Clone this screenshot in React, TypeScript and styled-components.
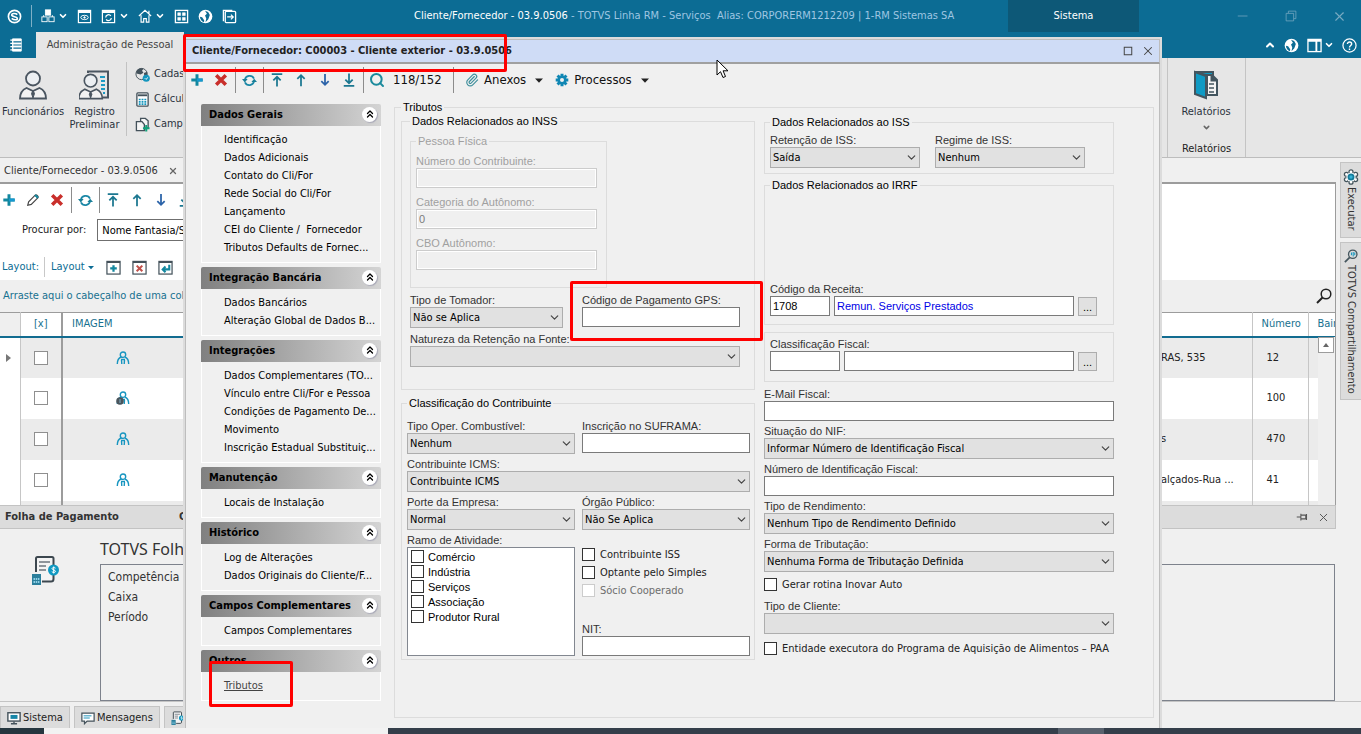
import React, { useId } from "react";
import styled, { createGlobalStyle } from "styled-components";
import { ChevronDown, ChevronUp, ChevronsUp, X, Search, Paperclip } from "lucide-react";

const ui = `"DejaVu Sans Condensed", "DejaVu Sans", sans-serif`;
const plain = `"Liberation Sans", Arial, sans-serif`;
const brand = "#0c6c94";
const face = "#f0f0f0";
const teal = "#17718f";

const GlobalStyle = createGlobalStyle`
  * { box-sizing: border-box; }
  body { margin: 0; background: ${face}; font: 11px/14px ${ui}; color: #222; }
  button, input, select { font: inherit; color: inherit; margin: 0; }
  button { padding: 0; border: 0; background: none; }
  svg { display: block; flex: none; }
`;

/* ---------- shell ---------- */

const Shell = styled.div`
  position: relative;
  display: flex;
  flex-direction: column;
  height: 100vh;
  min-height: 734px;
  overflow: hidden;
`;

const TitleBar = styled.header`
  display: flex;
  align-items: center;
  height: 32px;
  flex: none;
  background: ${brand};
  color: #fff;
`;

const QuickAccess = styled.div`
  display: flex;
  align-items: center;
  gap: 9px;
  width: 414px;
  flex: none;
  padding-left: 7px;
`;

const QuickButton = styled.button`
  display: flex;
  align-items: center;
  gap: 3px;
  height: 24px;
  color: #fff;
`;

const QuickRule = styled.span`
  width: 1px;
  height: 22px;
  background: #7fb0c6;
`;

const AppTitle = styled.h1`
  flex: 1;
  margin: 0;
  font-size: 11px;
  font-weight: 400;
  white-space: pre;
  color: #9ec6e2;
  b { font-weight: 400; color: #fff; }
`;

const ContextTab = styled.div`
  width: 131px;
  height: 32px;
  line-height: 32px;
  text-align: center;
  background: #0d5877;
`;

const WindowButtons = styled.div`
  display: flex;
  justify-content: space-between;
  align-items: center;
  width: 222px;
  padding: 0 12px 0 94px;
  button { width: 20px; height: 20px; color: #78aac2; display: grid; place-items: center; }
`;

const RibbonTabs = styled.nav`
  display: flex;
  height: 26px;
  flex: none;
  background: ${brand};
  color: #fff;
`;

const FileButton = styled.button`
  display: grid;
  place-items: center;
  width: 36px;
  padding-right: 4px;
  color: #fff;
`;

const RibbonTab = styled.button`
  width: 148px;
  height: 26px;
  background: #e6e6e6;
  color: #444;
`;

const RibbonTools = styled.div`
  display: flex;
  align-items: center;
  gap: 8px;
  margin-left: auto;
  padding-right: 4px;
`;

const ToolPair = styled.span`
  display: flex;
  align-items: center;
  gap: 2px;
`;

const Ribbon = styled.section`
  display: flex;
  height: 100px;
  flex: none;
  background: #e6e6e6;
  border-bottom: 1px solid #bdbdbd;
`;

const BigButton = styled.button<{ $w: number }>`
  display: flex;
  flex-direction: column;
  align-items: center;
  align-self: flex-start;
  gap: 5px;
  width: ${(p) => p.$w}px;
  padding-top: 12px;
  line-height: 13px;
  color: #2b3340;
  white-space: nowrap;
`;

const RibbonRule = styled.span`
  width: 1px;
  height: 74px;
  margin: 4px 8px 0 3px;
  background: #c2c2c2;
`;

const SmallStack = styled.div`
  display: flex;
  flex-direction: column;
  gap: 9px;
  padding-top: 8px;
`;

const SmallButton = styled.button`
  display: flex;
  align-items: center;
  gap: 4px;
  height: 16px;
  color: #2b3340;
`;

const ReportGroup = styled.div`
  display: flex;
  flex-direction: column;
  align-items: center;
  justify-content: space-between;
  width: 79px;
  margin: 0 115px 0 auto;
  padding-bottom: 1px;
  border: solid #c4c4c4;
  border-width: 0 1px;
`;

const Workspace = styled.div`
  display: flex;
  flex: 1;
  min-height: 0;
`;

const Main = styled.main`
  display: flex;
  flex-direction: column;
  flex: 1;
  min-width: 0;
`;

const DocTab = styled.div`
  display: flex;
  align-items: center;
  gap: 10px;
  height: 24px;
  flex: none;
  padding: 2px 0 0 4px;
  color: #333;
`;

const ListPane = styled.section`
  position: relative;
  display: flex;
  flex-direction: column;
  height: 323px;
  flex: none;
  overflow: hidden;
  background: #fff;
  border-top: 2px solid #9c9c9c;
  border-right: 1px solid #9c9c9c;
`;

const Toolbar = styled.div`
  display: flex;
  align-items: center;
  height: 32px;
  flex: none;
  margin: 0 -3px;
`;

const ToolButton = styled.button`
  display: grid;
  place-items: center;
  width: 24px;
  height: 24px;
`;

const ToolRule = styled.span`
  width: 1px;
  height: 26px;
  margin: 0 1px 0 2px;
  background: #8c8c8c;
`;

const FindRow = styled.label`
  display: flex;
  align-items: center;
  gap: 11px;
  height: 28px;
  flex: none;
  padding-left: 22px;
  input {
    width: 200px;
    height: 22px;
    padding: 0 4px;
    border: 1px solid #6f6f6f;
    background: #fff;
    color: #000;
  }
`;

const LayoutRow = styled.div`
  display: flex;
  align-items: center;
  height: 36px;
  flex: none;
  padding: 10px 0 0 2px;
  color: ${brand};
`;

const LayoutRule = styled.span`
  width: 1px;
  height: 20px;
  margin: 0 6px 0 5px;
  background: #c8c8c8;
`;

const LayoutMenu = styled.button`
  display: flex;
  align-items: center;
  gap: 3px;
`;

const LayoutActions = styled.div`
  display: flex;
  gap: 2px;
  padding-left: 8px;
`;

const GroupHint = styled.div`
  display: flex;
  align-items: center;
  justify-content: space-between;
  height: 32px;
  flex: none;
  padding: 0 3px;
  background: #efefef;
  color: ${teal};
`;

const Grid = styled.table`
  width: 100%;
  table-layout: fixed;
  border-collapse: collapse;
  border-top: 1px solid #9c9c9c;
  color: #222;

  th {
    height: 24px;
    padding: 0 9px;
    font-weight: 400;
    text-align: left;
    color: ${teal};
    border-bottom: 2px solid #126c90;
    border-right: 1px solid #c6c6c6;
    white-space: nowrap;
  }
  th:first-child { background: #efefef; }
  td {
    height: 41px;
    padding: 0 14px;
    border-right: 1px solid #c6c6c6;
    white-space: nowrap;
  }
  tbody tr:nth-child(odd) td { background: #ebebeb; }
  tbody tr td:first-child { background: #fff; padding: 0 6px; }
  th:nth-child(2), td:nth-child(2) { border-right: 2px solid #9c9c9c; }
  th:nth-child(2) { text-align: center; padding: 0; }
  td:nth-child(2) { padding: 0 13px; }
  td:nth-child(3) { padding: 0 0 0 53px; }
  th:nth-child(3), td:nth-child(3) { border-right: 0; }
  th:nth-child(6) { border-right: 0; }
  td:nth-child(4) { padding: 0; }
  td:nth-child(6) { border-right: 0; }
`;

const ScrollTrack = styled.div`
  position: absolute;
  top: 153px;
  right: 0;
  bottom: 0;
  width: 17px;
  background: #efefef;
  button {
    display: grid;
    place-items: center;
    width: 16px;
    height: 16px;
    border: 1px solid #9c9c9c;
    background: #fff;
  }
`;

const Check = styled.input.attrs({ type: "checkbox" })<{ $soft?: boolean }>`
  appearance: none;
  display: block;
  flex: none;
  width: ${(p) => (p.$soft ? 14 : 13)}px;
  height: ${(p) => (p.$soft ? 14 : 13)}px;
  border: 1px solid ${(p) => (p.$soft ? "#8f8f8f" : "#333")};
  background: #fff;
  &:checked { background: ${brand}; }
  &:disabled { border-color: #ccc; }
`;

const DockHeader = styled.header`
  display: flex;
  align-items: center;
  height: 24px;
  flex: none;
  padding: 0 5px;
  background: #dcdcdc;
  border: solid #c3c3c3;
  border-width: 1px 1px 1px 0;
  font-weight: 700;
  color: #333;
  span { width: 174px; }
  span:last-of-type { flex: 1; }
  button { margin-left: 9px; color: #555; }
`;

const DockBody = styled.section`
  display: flex;
  flex: 1;
  min-height: 0;
  color: #333;
`;

const DockIcon = styled.div`
  width: 100px;
  padding: 26px 0 0 31px;
`;

const DockContent = styled.div`
  display: flex;
  flex-direction: column;
  flex: 1;
  h2 { margin: 10px 0 5px; font: 400 16px/20px "Noto Sans", sans-serif; }
  ul {
    flex: 1;
    margin: 0 1px 0 0;
    padding: 2px 7px;
    list-style: none;
    border: 1px solid #7d828c;
    font-size: 12px;
    line-height: 20px;
  }
`;

const SideTabs = styled.aside`
  display: flex;
  flex-direction: column;
  gap: 4px;
  width: 21px;
  margin: 4px 0 0 4px;
`;

const SideTab = styled.button`
  display: flex;
  align-items: center;
  gap: 2px;
  width: 21px;
  padding: 6px 0;
  writing-mode: vertical-rl;
  border: 1px solid #c4c4c4;
  border-right: 0;
  background: #dcdcdc;
  color: #333;
`;

const StatusBar = styled.footer`
  display: flex;
  gap: 4px;
  height: 27px;
  flex: none;
  padding-top: 4px;
  border-top: 1px solid #c4c4c4;
`;

const StatusButton = styled.button`
  display: flex;
  align-items: center;
  gap: 2px;
  padding: 0 6px;
  border: 1px solid #c4c4c4;
  border-bottom: 0;
  background: #dcdcdc;
  color: #222;
`;

const Taskbar = styled.div`
  display: grid;
  grid-template-columns: 44px 344px 1fr 46px 257px;
  height: 6px;
  flex: none;
  background: #343e4a;
  i:nth-child(1) { background: #25363f; }
  i:nth-child(2) { background: #f2f2f2; }
  i:nth-child(4) { background: #58616d; }
`;

/* ---------- dialog ---------- */

const Dialog = styled.section`
  position: absolute;
  top: 37px;
  left: 183px;
  right: 199px;
  bottom: 6px;
  display: flex;
  flex-direction: column;
  background: ${face};
  border: 2px solid #dcdcdc;
  border-bottom: 0;
`;

const DialogTitle = styled.header`
  display: flex;
  align-items: center;
  height: 25px;
  flex: none;
  padding: 0 1px 0 6px;
  background: #cfdcf6;
  border: 1px solid #bdbdbd;
  border-bottom: 2px solid #a0a0a0;
  h2 { flex: 1; margin: 0; font: 700 11px/14px ${ui}; color: #222; }
  button { display: grid; place-items: center; width: 20px; height: 20px; color: #444; }
`;

const DialogBody = styled.div`
  display: flex;
  flex: 1;
  flex-direction: column;
  border: solid #bdbdbd;
  border-width: 0 1px;
`;

const DialogTools = styled(Toolbar)`
  margin: 0 -1px;
  font-size: 13px;
  color: #111;
`;

const RecordCount = styled.span`
  width: 62px;
  padding-left: 4px;
`;

const MenuButton = styled.button<{ $gap: number }>`
  display: flex;
  align-items: center;
  gap: 5px;
  padding-left: ${(p) => p.$gap}px;
  svg:last-child { margin-left: 4px; }
`;

const DialogColumns = styled.div`
  display: flex;
  flex: 1;
  gap: 13px;
  padding: 4px 5px 10px 15px;
`;

const SideNav = styled.nav`
  display: flex;
  flex-direction: column;
  gap: 4px;
  width: 180px;
  flex: none;
  padding-top: 4px;
`;

const NavHead = styled.button`
  display: flex;
  align-items: center;
  justify-content: space-between;
  width: 100%;
  height: 22px;
  padding: 0 4px 0 8px;
  border-radius: 2px 2px 0 0;
  background: linear-gradient(90deg, #808080, #d4d4d4);
  font-weight: 700;
  color: #000;
  i {
    display: grid;
    place-items: center;
    width: 15px;
    height: 15px;
    margin-bottom: 2px;
    border-radius: 50%;
    background: #fff;
    box-shadow: 1px 1px 1px #aaaab8;
  }
`;

const NavList = styled.ul`
  margin: 0;
  padding: 5px 0 5px 22px;
  list-style: none;
  border: 1px solid #fff;
  border-top: 0;
  li { height: 18px; }
`;

const NavLink = styled.a<{ $current?: boolean }>`
  font: 11px/18px ${ui};
  white-space: pre;
  color: ${(p) => (p.$current ? "#444" : "#000")};
  text-decoration: ${(p) => (p.$current ? "underline" : "none")};
`;

const Group = styled.fieldset<{ $pad?: string; $off?: boolean }>`
  min-width: 0;
  margin: 0;
  padding: ${(p) => p.$pad ?? "0"};
  border: 1px solid #dcdcdc;
  font-family: ${plain};
  color: ${(p) => (p.$off ? "#a0a0a0" : "#000")};
  > legend { padding: 0 2px; line-height: 14px; }
`;

const Columns = styled.div`
  display: flex;
  gap: 9px;
`;

const Column = styled.div<{ $w: number; $gap?: number; $top?: number }>`
  display: flex;
  flex-direction: column;
  width: ${(p) => p.$w}px;
  gap: ${(p) => p.$gap ?? 0}px;
  padding-top: ${(p) => p.$top ?? 0}px;
`;

const Stack = styled.div<{ $gap: number; $top?: number }>`
  display: flex;
  flex-direction: column;
  gap: ${(p) => p.$gap}px;
  padding-top: ${(p) => p.$top ?? 0}px;
`;

const Row = styled.div<{ $cols: string; $gap: number }>`
  display: grid;
  grid-template-columns: ${(p) => p.$cols};
  column-gap: ${(p) => p.$gap}px;
  align-items: start;
`;

const FieldBox = styled.div`
  display: flex;
  flex-direction: column;
  min-width: 0;
`;

const Label = styled.label<{ $off?: boolean }>`
  font-family: ${plain};
  line-height: 14px;
  white-space: nowrap;
  color: ${(p) => (p.$off ? "#a0a0a0" : "#333")};
`;

const TextBox = styled.input.attrs({ type: "text" })<{ $link?: boolean }>`
  width: 100%;
  height: 20px;
  padding: 0 2px;
  border: 1px solid #7a7a7a;
  background: #fff;
  color: ${(p) => (p.$link ? "#0000e6" : "#000")};
  &:disabled {
    border-color: #ccc;
    background: ${face};
    box-shadow: inset 0 0 0 1px #fff;
    color: #7c7c7c;
  }
`;

const SelectWrap = styled.span`
  position: relative;
  display: block;
  svg { position: absolute; top: 4px; right: 2px; pointer-events: none; color: #444; }
`;

const Select = styled.select`
  appearance: none;
  display: block;
  width: 100%;
  height: 21px;
  padding: 0 20px 0 2px;
  border: 1px solid #adadad;
  border-radius: 0;
  background: #e1e1e1;
  font-family: ${ui};
  color: #000;
`;

const Browse = styled.button`
  width: 19px;
  height: 19px;
  margin-top: 1px;
  border: 1px solid #adadad;
  background: #e1e1e1;
  line-height: 14px;
`;

const CheckLabel = styled.label<{ $off?: boolean; $plain?: boolean }>`
  display: flex;
  align-items: center;
  gap: ${(p) => (p.$plain ? 4 : 5)}px;
  height: ${(p) => (p.$plain ? 15 : 13)}px;
  font-family: ${(p) => (p.$plain ? plain : ui)};
  white-space: nowrap;
  color: ${(p) => (p.$off ? "#6d6d6d" : p.$plain ? "#000" : "#222")};
`;

const CheckList = styled.div`
  height: 109px;
  padding: 1px 3px;
  border: 1px solid #828790;
  background: #fff;
`;

const Ticks = styled.div`
  display: flex;
  flex-direction: column;
  gap: 5px;
  height: 123px;
  padding-top: 15px;
`;

const NitSlot = styled.div`
  margin-top: auto;
`;

const FiscalGroup = styled(Group)`
  margin-top: 3px;
`;

const FormArea = styled.div`
  display: grid;
  flex: 1;
  min-width: 0;
`;

const Highlight = styled.div<{ $x: number; $y: number; $w: number; $h: number }>`
  position: absolute;
  left: ${(p) => p.$x}px;
  top: ${(p) => p.$y}px;
  width: ${(p) => p.$w}px;
  height: ${(p) => p.$h}px;
  border: 3px solid #f00;
  border-radius: 2px;
  pointer-events: none;
`;

const Cursor = styled.svg`
  position: absolute;
  left: 716px;
  top: 59px;
  pointer-events: none;
`;

/* ---------- icons ---------- */

const Svg = ({ s = 16, children }: { s?: number; children: React.ReactNode }) => (
  <svg width={s} height={s} viewBox="0 0 16 16" fill="none" stroke="currentColor" aria-hidden="true">{children}</svg>
);

const PlusIcon = () => <Svg s={14}><path d="M8 1.5v13M1.5 8h13" stroke="#12879f" strokeWidth="3.4" /><path d="M8 8h6.5" stroke="#1598d0" strokeWidth="3.4" /></Svg>;
const DeleteIcon = () => <Svg s={14}><path d="M2.5 2.5l11 11M13.5 2.5l-11 11" stroke="#c92f2b" strokeWidth="4" /></Svg>;
const PencilIcon = () => <Svg s={14}><path d="M2 14l1-4 7.500-7.500a1.500 1.500 0 0 1 2 0l1 1a1.500 1.500 0 0 1 0 2L6 13z" stroke="#444" strokeWidth="1.300" /><path d="M10 3l3 3 1-1.500L11.500 2z" fill="#12879f" stroke="#12879f" /></Svg>;
const arrowPaths: Record<string, string> = {
  up: "M8 15V2.500M3.800 6.700L8 2.500l4.200 4.200",
  down: "M8 1v12.500M3.800 9.300L8 13.500l4.200-4.200",
  top: "M2 1.200h12M8 15.500V4.500M3.800 8.500L8 4.300l4.200 4.200",
  bottom: "M2 14.800h12M8 .5v11M3.800 7.500L8 11.700l4.200-4.200",
};
const ArrowIcon = ({ kind }: { kind: string }) => <Svg s={14}><path d={arrowPaths[kind]} stroke={kind === "down" ? "#2a62a8" : "#1b7790"} strokeWidth="2" /></Svg>;
const SyncIcon = () => (
  <Svg s={15}>
    <path d="M3 7.500A5.200 5.200 0 0 1 12.800 6M13 8.500A5.200 5.200 0 0 1 3.200 10" stroke="#1a87a6" strokeWidth="1.900" />
    <path d="M0 6.500h6L3 10zM16 9.500h-6L13 6z" fill="#1a7f98" stroke="none" />
  </Svg>
);
const Caret = ({ c = "#222", s = 8 }: { c?: string; s?: number }) => <svg width={s} height="5" viewBox="0 0 8 5" aria-hidden="true"><path d="M0 .5h8L4 4.800z" fill={c} /></svg>;
const GearIcon = ({ s = 14 }: { s?: number }) => (
  <Svg s={s}>
    <g stroke="#0f86b3" strokeWidth="3.400"><path d="M8 .8v14.400M.8 8h14.400M2.900 2.900l10.200 10.200M13.100 2.900L2.900 13.100" /></g>
    <circle cx="8" cy="8" r="5.200" fill="#0f86b3" stroke="none" />
    <circle cx="8" cy="8" r="2.300" fill={face} stroke="none" />
  </Svg>
);
const FlowerGearIcon = () => (
  <Svg s={16}>
    <g fill="#fff" stroke="#44555d" strokeWidth="1.300">
      <circle cx="8" cy="2.800" r="2" /><circle cx="8" cy="13.200" r="2" />
      <circle cx="3.400" cy="5.400" r="2" /><circle cx="12.600" cy="5.400" r="2" />
      <circle cx="3.400" cy="10.600" r="2" /><circle cx="12.600" cy="10.600" r="2" />
    </g>
    <circle cx="8" cy="8" r="4.600" fill="#fff" stroke="none" />
    <circle cx="8" cy="8" r="2.600" fill="#35b4d8" stroke="#147a99" strokeWidth="1.800" />
  </Svg>
);
const GlobeIcon = () => (
  <Svg s={15}>
    <circle cx="8" cy="8" r="7.300" fill="currentColor" stroke="none" />
    <path d="M7.500 1.800l3.300 1.400 1.800 3.300-1.600 4.300-3 3.200.8-4L7.500 7l2-2z" fill={brand} stroke="none" />
    <path d="M2 8.200l2.400.6L6.600 12l-.2 2C4 13.200 2.200 11 2 8.200z" fill={brand} stroke="none" />
  </Svg>
);
const LogoIcon = () => <Svg s={15}><circle cx="8" cy="8" r="6.500" strokeWidth="1.800" /><path d="M11 6c-2-2-6-1.500-6 .5s6 1.500 6 3.500-3.500 2-6 0" strokeWidth="1.700" /></Svg>;
const BlocksIcon = () => <Svg s={14}><rect x="5" y="1" width="6" height="6" fill="currentColor" /><rect x="1" y="9" width="6" height="5.500" /><rect x="9" y="9" width="6" height="5.500" /><path d="M3 9V7M13 9V7" /></Svg>;
const WindowIcon = ({ children }: { children: React.ReactNode }) => <Svg s={15}><rect x="1.500" y="1.500" width="13" height="13" strokeWidth="1.300" /><path d="M1.500 3h13" strokeWidth="2.500" />{children}</Svg>;
const HomeIcon = () => <Svg s={14}><path d="M1 8l7-6.500L15 8M3.500 7v8h3v-4h3v4h3V7M12.500 2v3" strokeWidth="1.300" /></Svg>;
const MosaicIcon = () => <Svg s={15}><rect x="1.500" y="1.500" width="13" height="13" strokeWidth="1.400" /><path d="M4 4h3v3H4zM9 4h3v3H9zM4 9h3v3H4zM9 9h3v3H9z" fill="currentColor" strokeWidth=".6" /></Svg>;
const ExitIcon = () => <Svg s={15}><rect x="3.500" y="2.500" width="11" height="12" rx="1" strokeWidth="1.400" /><path d="M1.500 13V1.500H11" strokeWidth="1.400" /><path d="M5.500 8.500H12M9.500 6l2.500 2.500L9.500 11" strokeWidth="1.300" /></Svg>;
const BookIcon = () => <Svg s={14}><path d="M4 1h10v14H4z" fill="currentColor" /><path d="M5 4.500h9M5 8h9M5 11.500h9" stroke={brand} strokeWidth="1.300" /><path d="M1.500 2.500h3M1.500 6.200h3M1.500 9.800h3M1.500 13.500h3" strokeWidth="1.400" /></Svg>;
const PinIcon = () => <Svg s={12}><path d="M1 8h5M6.500 3.500v9M7 5.500h6v5H7M14 4v8" strokeWidth="1.400" /></Svg>;

const PersonBig = ({ doc }: { doc?: boolean }) => (
  <svg width="32" height="30" viewBox="0 0 32 30" fill="none" stroke="#4a5560" strokeWidth="1.800" aria-hidden="true">
    {doc && <><path d="M9 3V1.500h20v26H22" strokeWidth="2" /><path d="M21 7h5M22 11h4M22 15h4M22 19h4M24 23h2" stroke="#1a9ac4" strokeWidth="2" /></>}
    <g transform={doc ? "translate(-1 3) scale(.9)" : "translate(2 0)"}>
      <circle cx="14" cy="8.500" r="7" fill="#eceff2" />
      <path d="M1 28.500c0-6 3-9 6.500-10.500L14 21l6.500-3c3.500 1.500 6.500 4.500 6.500 10.500z" fill="#f2f2f2" />
      <path d="M14 20.500l-1.500 3 1.500 4.500 1.500-4.500z" fill="#4a5560" strokeWidth="1" />
    </g>
  </svg>
);

const FolderReport = () => (
  <svg width="26" height="30" viewBox="0 0 26 30" fill="none" stroke="#43555f" strokeWidth="2" aria-hidden="true">
    <path d="M14 5h5l5 5v15H14z" fill="#f4f4f4" />
    <path d="M18.500 5v5.500H24" fill="#43555f" />
    <path d="M2 2h18v3h-7z" fill="#0f9ac4" />
    <path d="M2 2l11 4v22L2 24z" fill="#0f9ac4" />
    <path d="M16 14h5M16 18h5M16 22h5" strokeWidth="1.500" />
  </svg>
);

const WorldCheck = () => <Svg s={15}><circle cx="7" cy="7.500" r="6" stroke="#44525b" /><path d="M1.500 4.500C3 1.500 6 1 9 1.800L7.500 4 9 6 6 8 1.500 7zM9.500 6.500L13 5v4l-3 1z" fill="#44525b" stroke="none" /><circle cx="12" cy="12" r="3.800" fill="#1395bd" stroke="none" /><path d="M10.500 12l1.200 1.200L14 11" stroke="#fff" /></Svg>;
const CalcIcon = () => <Svg s={15}><rect x="2" y="1" width="12" height="14" rx="1" stroke="#44525b" strokeWidth="1.400" fill="#fff" /><path d="M3 3.500h10" stroke="#44525b" strokeWidth="2" /><path d="M4 8h8M4 10.500h8M4 13h8" stroke="#1395bd" strokeWidth="1.800" strokeDasharray="2 1" /></Svg>;
const FieldsIcon = () => <Svg s={15}><path d="M6 5V1.500h5L14 4v8h-3M1.500 5h6L10 8v6.500H1.500z" stroke="#44525b" strokeWidth="1.400" fill="#f6f6f6" /><path d="M12 8.500v7M8.500 12h7" stroke="#12a37c" strokeWidth="2.200" /></Svg>;

const PersonIcon = ({ badge }: { badge?: boolean }) => (
  <svg width="14" height="14" viewBox="0 0 14 14" fill="none" stroke="#1795c0" strokeWidth="1.400" aria-hidden="true">
    <circle cx="7" cy="3.700" r="2.700" />
    <path d="M1.300 13c0-3.500 1.500-6 3.700-7M12.700 13c0-3.500-1.500-6-3.700-7M5.500 9l.3 4M8.500 9l-.3 4M5 8.500h4" />
    {badge && <><circle cx="4" cy="10" r="3.800" fill="#4a555c" stroke="none" /><path d="M4 8v4" stroke="#7fb0c6" strokeWidth="1" /></>}
  </svg>
);

const FramedIcon = ({ children }: { children: React.ReactNode }) => <Svg s={15}><rect x="1" y="1.500" width="14" height="13.500" stroke="#44525b" strokeWidth="1.300" /><path d="M1 2.300h14" stroke="#44525b" strokeWidth="1.800" />{children}</Svg>;

const PayrollIcon = ({ s = 30 }: { s?: number }) => (
  <svg width={s} height={s} viewBox="0 0 30 30" fill="none" aria-hidden="true">
    <path d="M5 17V3.500Q5 2 6.500 2H21q1.500 0 1.500 1.500V24q0 2.500-2.500 2.500h-9" stroke="#3c474f" strokeWidth="2" fill="#f4f4f4" />
    <path d="M8 7h11M8 11h7M8 15h7" stroke="#6d767d" strokeWidth="1.700" />
    <circle cx="22.500" cy="15" r="5.500" fill="#1099c2" />
    <path d="M24.500 13.200c-1-1-3.500-.8-3.500.5s3.500 1.200 3.500 2.600-2.500 1.500-3.700.4M22.700 11.500v7" stroke="#fff" strokeWidth="1" />
    <rect x="1" y="19" width="9" height="11" fill="#2b7f9c" />
    <path d="M2.500 24h6M2.500 27h6" stroke="#8fd0e6" strokeWidth="1.800" strokeDasharray="1.500 .7" />
  </svg>
);

const MonitorIcon = () => <Svg s={14}><rect x="1" y="2" width="14" height="9.500" stroke="#44525b" strokeWidth="1.600" fill="#fff" /><rect x="4" y="4.500" width="8" height="4.500" fill="#1686a8" stroke="none" /><path d="M8 12v2M4.500 14.500h7" stroke="#44525b" strokeWidth="1.600" /></Svg>;
const MessageIcon = () => <Svg s={14}><path d="M1 2.500h14v9H7L4 14.500v-3H1z" stroke="#44525b" strokeWidth="1.400" fill="#fff" /><path d="M3 5.500h9M3 8h7" stroke="#6cb8d2" strokeWidth="1.800" /></Svg>;
const MagnifyIcon = ({ s = 16, c = "#222", bars }: { s?: number; c?: string; bars?: boolean }) => (
  <Svg s={s}>
    <circle cx="10" cy="6" r="4.800" stroke={c} strokeWidth="1.500" />
    <path d="M6.500 9.500L1 15" stroke={c} strokeWidth="2" />
    {bars && <path d="M8.500 4v3M10.500 3.500v5M12.300 4v3" stroke="#1395bd" strokeWidth="1.200" />}
  </Svg>
);

/* ---------- fields ---------- */

const Field = ({ label, value = "", disabled }: { label: string; value?: string; disabled?: boolean }) => {
  const id = useId();
  return (
    <FieldBox>
      <Label htmlFor={id} $off={disabled}>{label}</Label>
      <TextBox id={id} defaultValue={value} disabled={disabled} />
    </FieldBox>
  );
};

const Choice = ({ label, value = "" }: { label: string; value?: string }) => {
  const id = useId();
  return (
    <FieldBox>
      <Label htmlFor={id}>{label}</Label>
      <SelectWrap>
        <Select id={id} defaultValue={value}><option value={value}>{value}</option></Select>
        <ChevronDown size={13} strokeWidth={2.2} />
      </SelectWrap>
    </FieldBox>
  );
};

const Tick = ({ label, disabled, compact }: { label: string; disabled?: boolean; compact?: boolean }) => (
  <CheckLabel $off={disabled} $plain={compact}><Check disabled={disabled} />{label}</CheckLabel>
);

const Lookup = ({ label, cols, code = "", text = "" }: { label: string; cols: string; code?: string; text?: string }) => {
  const id = useId();
  return (
    <FieldBox>
      <Label htmlFor={id}>{label}</Label>
      <Row $cols={cols} $gap={4}>
        <TextBox id={id} defaultValue={code} />
        <TextBox aria-label={`${label} descrição`} defaultValue={text} $link />
        <Browse aria-label={`Procurar ${label}`}>...</Browse>
      </Row>
    </FieldBox>
  );
};

/* ---------- data ---------- */

const navGroups: { title: string; items: string[] }[] = [
  { title: "Dados Gerais", items: ["Identificação", "Dados Adicionais", "Contato do Cli/For", "Rede Social do Cli/For", "Lançamento", "CEI do Cliente /  Fornecedor", "Tributos Defaults de Fornec..."] },
  { title: "Integração Bancária", items: ["Dados Bancários", "Alteração Global de Dados B..."] },
  { title: "Integrações", items: ["Dados Complementares (TO...", "Vínculo entre Cli/For e Pessoa", "Condições de Pagamento De...", "Movimento", "Inscrição Estadual Substituiç..."] },
  { title: "Manutenção", items: ["Locais de Instalação"] },
  { title: "Histórico", items: ["Log de Alterações", "Dados Originais do Cliente/F..."] },
  { title: "Campos Complementares", items: ["Campos Complementares"] },
  { title: "Outros", items: ["Tributos"] },
];

const records = [
  { address: "RAS, 535", number: "12" },
  { address: "", number: "100", badge: true },
  { address: "s", number: "470" },
  { address: "alçados-Rua ...", number: "41" },
];

const activities = ["Comércio", "Indústria", "Serviços", "Associação", "Produtor Rural"];

const Arrows = () => (
  <>
    <ToolButton aria-label="Primeiro"><ArrowIcon kind="top" /></ToolButton>
    <ToolButton aria-label="Anterior"><ArrowIcon kind="up" /></ToolButton>
    <ToolButton aria-label="Próximo"><ArrowIcon kind="down" /></ToolButton>
    <ToolButton aria-label="Último"><ArrowIcon kind="bottom" /></ToolButton>
  </>
);

const QuickMore = () => <ChevronDown size={10} strokeWidth={4} />;

const Background = () => (
  <>
    <TitleBar>
      <QuickAccess>
        <QuickButton aria-label="Início"><LogoIcon /></QuickButton>
        <QuickRule />
        <QuickButton aria-label="Módulos"><BlocksIcon /><QuickMore /></QuickButton>
        <QuickButton aria-label="Visualizar"><WindowIcon><ellipse cx="8" cy="9" rx="4" ry="2.300" /><circle cx="8" cy="9" r=".8" fill="currentColor" /></WindowIcon></QuickButton>
        <QuickButton aria-label="Atualizar janelas"><WindowIcon><path d="M5 9a3 3 0 0 1 5.500-1.500M11 9.500A3 3 0 0 1 5.500 11" strokeWidth="1.300" /></WindowIcon><QuickMore /></QuickButton>
        <QuickButton aria-label="Página inicial"><HomeIcon /><QuickMore /></QuickButton>
        <QuickButton aria-label="Painéis"><MosaicIcon /></QuickButton>
        <QuickButton aria-label="Portal"><GlobeIcon /></QuickButton>
        <QuickButton aria-label="Sair"><ExitIcon /></QuickButton>
      </QuickAccess>
      <AppTitle><b>Cliente/Fornecedor - 03.9.0506</b>{" - TOTVS Linha RM - Serviços  Alias: CORPORERM1212209 | 1-RM Sistemas SA"}</AppTitle>
      <ContextTab>Sistema</ContextTab>
      <WindowButtons>
        <button aria-label="Minimizar"><Svg s={12}><path d="M1 8h13" /></Svg></button>
        <button aria-label="Restaurar"><Svg s={12}><path d="M1.500 4.500h10v10h-10zM4.500 4V1.500h10v10H12" /></Svg></button>
        <button aria-label="Fechar"><X size={15} strokeWidth={1.8} /></button>
      </WindowButtons>
    </TitleBar>
    <RibbonTabs>
      <FileButton aria-label="Menu"><BookIcon /></FileButton>
      <RibbonTab>Administração de Pessoal</RibbonTab>
      <RibbonTools>
        <ChevronUp size={12} strokeWidth={4} />
        <GlobeIcon />
        <ToolPair>
          <Svg s={15}><rect x="1" y="1.500" width="14" height="13" strokeWidth="1.400" /><path d="M1 3h14M10 2v12" strokeWidth="2" /></Svg>
          <ChevronDown size={10} strokeWidth={4} />
        </ToolPair>
        <Svg s={15}><circle cx="8" cy="8" r="7" strokeWidth="1.300" /><path d="M5.800 6.500c0-3 4.500-2.800 4.500 0C10.300 8 8 8 8 10M8 11.300v1.500" strokeWidth="1.500" /></Svg>
      </RibbonTools>
    </RibbonTabs>
    <Ribbon>
      <BigButton $w={66}><PersonBig />Funcionários</BigButton>
      <BigButton $w={57}><PersonBig doc /><span>Registro<br />Preliminar</span></BigButton>
      <RibbonRule />
      <SmallStack>
        <SmallButton><WorldCheck />Cadastros</SmallButton>
        <SmallButton><CalcIcon />Cálculos</SmallButton>
        <SmallButton><FieldsIcon />Campos</SmallButton>
      </SmallStack>
      <ReportGroup>
        <BigButton $w={76}><FolderReport />Relatórios<ChevronDown size={9} strokeWidth={4} color="#666" /></BigButton>
        <span>Relatórios</span>
      </ReportGroup>
    </Ribbon>
    <Workspace>
      <Main>
        <DocTab>Cliente/Fornecedor - 03.9.0506 <X size={10} strokeWidth={3} color="#666" /></DocTab>
        <ListPane>
          <Toolbar>
            <ToolButton aria-label="Incluir"><PlusIcon /></ToolButton>
            <ToolButton aria-label="Editar"><PencilIcon /></ToolButton>
            <ToolButton aria-label="Excluir"><DeleteIcon /></ToolButton>
            <ToolRule />
            <ToolButton aria-label="Atualizar"><SyncIcon /></ToolButton>
            <ToolRule />
            <Arrows />
          </Toolbar>
          <FindRow>Procurar por: <input type="text" defaultValue="Nome Fantasia/Sobrenome" /></FindRow>
          <LayoutRow>
            Layout:
            <LayoutRule />
            <LayoutMenu>Layout <Caret c={brand} s={6} /></LayoutMenu>
            <LayoutActions>
              <ToolButton aria-label="Salvar layout"><FramedIcon><path d="M8 5.500v7M4.500 9h7" stroke="#12879f" strokeWidth="2.400" /></FramedIcon></ToolButton>
              <ToolButton aria-label="Excluir layout"><FramedIcon><path d="M5 6l6 6M11 6l-6 6" stroke="#c0504a" strokeWidth="2.200" /></FramedIcon></ToolButton>
              <ToolButton aria-label="Restaurar layout"><FramedIcon><path d="M12 5v5H5M8 7l-3 3 3 3" stroke="#12879f" strokeWidth="2.200" /></FramedIcon></ToolButton>
            </LayoutActions>
          </LayoutRow>
          <GroupHint><span>Arraste aqui o cabeçalho de uma coluna</span><MagnifyIcon /></GroupHint>
          <Grid>
            <colgroup><col width="20" /><col width="42" /><col /><col width="91" /><col width="56" /><col width="27" /></colgroup>
            <thead><tr><th /><th>[x]</th><th>IMAGEM</th><th /><th>Número</th><th>Bairro</th></tr></thead>
            <tbody>
              {records.map((r, i) => (
                <tr key={i}>
                  <td>{i === 0 && <svg width="5" height="8"><path d="M0 0l5 4-5 4z" fill="#777" /></svg>}</td>
                  <td><Check $soft aria-label={`Selecionar ${r.number}`} /></td>
                  <td><PersonIcon badge={r.badge} /></td>
                  <td>{r.address}</td>
                  <td>{r.number}</td>
                  <td />
                </tr>
              ))}
              <tr><td /><td /><td /><td /><td /><td /></tr>
            </tbody>
          </Grid>
          <ScrollTrack><button aria-label="Rolar para cima"><svg width="6" height="4"><path d="M0 4l3-4 3 4z" fill="#666" /></svg></button></ScrollTrack>
        </ListPane>
        <DockHeader>
          <span>Folha de Pagamento</span><span>Geral</span>
          <button aria-label="Fixar"><PinIcon /></button>
          <button aria-label="Fechar painel"><X size={13} strokeWidth={1.8} /></button>
        </DockHeader>
        <DockBody>
          <DockIcon><PayrollIcon /></DockIcon>
          <DockContent>
            <h2>TOTVS Folha</h2>
            <ul><li>Competência</li><li>Caixa</li><li>Período</li></ul>
          </DockContent>
        </DockBody>
      </Main>
      <SideTabs>
        <SideTab><FlowerGearIcon />Executar</SideTab>
        <SideTab><MagnifyIcon s={14} c="#44555d" bars />TOTVS Compartilhamento</SideTab>
      </SideTabs>
    </Workspace>
    <StatusBar>
      <StatusButton><MonitorIcon />Sistema</StatusButton>
      <StatusButton><MessageIcon />Mensagens</StatusButton>
      <StatusButton><PayrollIcon s={14} />Folha</StatusButton>
    </StatusBar>
    <Taskbar><i /><i /><i /><i /></Taskbar>
  </>
);

const TributosForm = () => (
  <Group $pad="0 6px">
    <legend>Tributos</legend>
    <Columns>
      <Column $w={354} $gap={6}>
        <Group $pad="6px 14px 22px 8px">
          <legend>Dados Relacionados ao INSS</legend>
          <Stack $gap={5}>
            <Column $w={197}>
              <Group $off $pad="6px 9px 17px 5px">
                <legend>Pessoa Física</legend>
                <Stack $gap={7}>
                  <Field label="Número do Contribuinte:" disabled />
                  <Field label="Categoria do Autônomo:" value="0" disabled />
                  <Field label="CBO Autônomo:" disabled />
                </Stack>
              </Group>
            </Column>
            <Stack $gap={4}>
              <Row $cols="153px 1fr" $gap={19}>
                <Choice label="Tipo de Tomador:" value="Não se Aplica" />
                <Field label="Código de Pagamento GPS:" />
              </Row>
              <Choice label="Natureza da Retenção na Fonte:" />
            </Stack>
          </Stack>
        </Group>
        <Group $pad="9px 4px 3px 5px">
          <legend>Classificação do Contribuinte</legend>
          <Stack $gap={3}>
            <Row $cols="1fr 1fr" $gap={7}>
              <Choice label="Tipo Oper. Combustível:" value="Nenhum" />
              <Field label="Inscrição no SUFRAMA:" />
            </Row>
            <Choice label="Contribuinte ICMS:" value="Contribuinte ICMS" />
            <Row $cols="1fr 1fr" $gap={7}>
              <Choice label="Porte da Empresa:" value="Normal" />
              <Choice label="Órgão Público:" value="Não Se Aplica" />
            </Row>
            <Row $cols="1fr 1fr" $gap={7}>
              <FieldBox>
                <Label as="span">Ramo de Atividade:</Label>
                <CheckList role="group" aria-label="Ramo de Atividade">
                  {activities.map((a) => <Tick key={a} label={a} compact />)}
                </CheckList>
              </FieldBox>
              <Ticks>
                <Tick label="Contribuinte ISS" />
                <Tick label="Optante pelo Simples" />
                <Tick label="Sócio Cooperado" disabled />
                <NitSlot><Field label="NIT:" /></NitSlot>
              </Ticks>
            </Row>
          </Stack>
        </Group>
      </Column>
      <Column $w={350} $gap={4} $top={1}>
        <Group $pad="4px 28px 5px 5px">
          <legend>Dados Relacionados ao ISS</legend>
          <Row $cols="150px 150px" $gap={15}>
            <Choice label="Retenção de ISS:" value="Saída" />
            <Choice label="Regime de ISS:" value="Nenhum" />
          </Row>
        </Group>
        <Group $pad="90px 15px 8px 5px">
          <legend>Dados Relacionados ao IRRF</legend>
          <Lookup label="Código da Receita:" cols="60px 1fr 20px" code="1708" text="Remun. Serviços Prestados" />
        </Group>
        <FiscalGroup $pad="4px 15px 10px 5px">
          <Lookup label="Classificação Fiscal:" cols="70px 1fr 20px" />
        </FiscalGroup>
        <Stack $gap={3} $top={1}>
          <Field label="E-Mail Fiscal:" />
          <Choice label="Situação do NIF:" value="Informar Número de Identificação Fiscal" />
          <Field label="Número de Identificação Fiscal:" />
          <Choice label="Tipo de Rendimento:" value="Nenhum Tipo de Rendimento Definido" />
          <Choice label="Forma de Tributação:" value="Nenhuma Forma de Tributação Definida" />
        </Stack>
        <Stack $gap={8} $top={2}>
          <Tick label="Gerar rotina Inovar Auto" />
          <Choice label="Tipo de Cliente:" />
          <Tick label="Entidade executora do Programa de Aquisição de Alimentos – PAA" />
        </Stack>
      </Column>
    </Columns>
  </Group>
);

export default function App() {
  return (
    <Shell>
      <GlobalStyle />
      <Background />
      <Dialog role="dialog" aria-label="Cliente/Fornecedor">
        <DialogTitle>
          <h2>Cliente/Fornecedor: C00003 - Cliente exterior - 03.9.0506</h2>
          <button aria-label="Maximizar"><Svg s={10}><rect x="2" y="2" width="12" height="12" strokeWidth="1.600" /></Svg></button>
          <button aria-label="Fechar"><X size={14} strokeWidth={1.800} /></button>
        </DialogTitle>
        <DialogBody>
          <DialogTools>
            <ToolButton aria-label="Incluir"><PlusIcon /></ToolButton>
            <ToolButton aria-label="Excluir"><DeleteIcon /></ToolButton>
            <ToolRule />
            <ToolButton aria-label="Atualizar"><SyncIcon /></ToolButton>
            <ToolRule />
            <Arrows />
            <ToolRule />
            <ToolButton aria-label="Procurar"><Search size={16} strokeWidth={3} color="#1b8a9c" /></ToolButton>
            <RecordCount>118/152</RecordCount>
            <ToolRule />
            <MenuButton $gap={10}><Paperclip size={14} color="#3f8f9c" />Anexos<Caret /></MenuButton>
            <MenuButton $gap={12}><GearIcon />Processos<Caret /></MenuButton>
          </DialogTools>
          <DialogColumns>
            <SideNav>
              {navGroups.map((g) => (
                <section key={g.title}>
                  <NavHead>{g.title}<i><ChevronsUp size={12} strokeWidth={2.600} /></i></NavHead>
                  <NavList>
                    {g.items.map((t) => <li key={t}><NavLink href="#" $current={g.title === "Outros"}>{t}</NavLink></li>)}
                  </NavList>
                </section>
              ))}
            </SideNav>
            <FormArea><TributosForm /></FormArea>
          </DialogColumns>
        </DialogBody>
      </Dialog>
      <Highlight $x={183} $y={34} $w={324} $h={38} />
      <Highlight $x={570} $y={281} $w={193} $h={60} />
      <Highlight $x={209} $y={661} $w={84} $h={46} />
      <Cursor width="13" height="20" viewBox="0 0 13 20">
        <path d="M1 1v15l3.500-3.300L7 18.500l2.500-1-2.400-5.700H12z" fill="#fff" stroke="#000" />
      </Cursor>
    </Shell>
  );
}
